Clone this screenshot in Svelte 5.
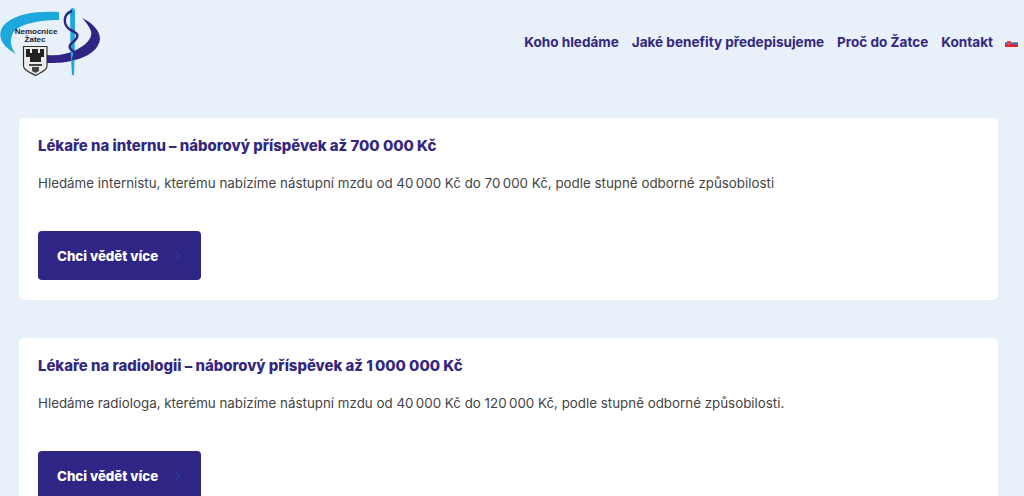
<script>
  const navLinks = ['Koho hledáme', 'Jaké benefity předepisujeme', 'Proč do Žatce', 'Kontakt'];
  const jobs = [
    {
      title: 'Lékaře na internu – náborový příspěvek až 700 000 Kč',
      text: 'Hledáme internistu, kterému nabízíme nástupní mzdu od 40\u2009000 Kč do 70\u2009000 Kč, podle stupně odborné způsobilosti'
    },
    {
      title: 'Lékaře na radiologii – náborový příspěvek až 1\u2009000 000 Kč',
      text: 'Hledáme radiologa, kterému nabízíme nástupní mzdu od 40\u2009000 Kč do 120\u2009000 Kč, podle stupně odborné způsobilosti.'
    }
  ];
</script>

<div class="page">
  <header>
    <svg class="logo" width="102" height="78" viewBox="0 0 102 78" aria-label="Nemocnice Žatec">
      <path d="M59 12 C38 11 18 13 6 23 C-1 29 -1 37 3 43 C6 48 11 51 16 54 C11 48 9 41 13 33 C19 24 38 20 59 20 Z" fill="#1ea7dc" />
      <path d="M82 18 C93 23 100 31 100 39 C99 50 87 57 75 60 C65 63 56 63 47 63 L47 55 C58 56 68 54 76 50 C86 45 93 38 91 31 C89 26 86 22 82 18 Z" fill="#2f2585" />
      <path d="M70 10 Q72.5 6 75 10 L74.8 50 L74 75 H72 L70.5 50 Z" fill="#1ea7dc" />
      <path d="M72 11 C63 14 63 24 69 29 C75 32 80 34 76 39 C73 43 68 44 70 48 C71 51 75 51 74.5 54 C74 57 73 58 73 60" stroke="#2f2585" stroke-width="2.4" fill="none" />
      <path d="M23.5 46.5 H47 V66 C47 71 39 73 35.5 75.5 C32 73 23.5 71 23.5 66 Z" fill="#ececec" stroke="#333" stroke-width="1.2" />
      <path d="M26 49 H30 V53 H32 V49 H38 V53 H40 V49 H44 V57 H41 V62 H30 V57 H26 Z" fill="#222" />
      <path d="M29 64 H42 V66 H29 Z M32 67 H39 V71 L35.5 73 L32 71 Z" fill="#444" />
      <text x="36" y="33.5" class="logo-text">Nemocnice</text>
      <text x="35" y="41.5" class="logo-text">Žatec</text>
    </svg>
    <nav>
      {#each navLinks as link}
        <a href="#top">{link}</a>
      {/each}
      <svg class="flag" width="13" height="7" viewBox="0 0 13 7" aria-label="Slovensky">
        <rect width="13" height="7" fill="#ee1c25" />
        <rect width="13" height="4.6" fill="#3f6fc0" />
        <rect width="13" height="2.3" fill="#f2f2f4" />
        <path d="M2 1 H6 V4.5 L4 6 L2 4.5 Z" fill="#e2474f" />
      </svg>
    </nav>
  </header>

  <main>
    {#each jobs as job}
      <section class="card">
        <h2>{job.title}</h2>
        <p>{job.text}</p>
        <a class="btn" href="#top">
          Chci vědět více
          <svg width="6" height="9" viewBox="0 0 6 9"><path d="M1 1 L4.5 4.5 L1 8" stroke="#2b4a9f" stroke-width="1" fill="none" /></svg>
        </a>
      </section>
    {/each}
  </main>
</div>

<style>
  :global(body) {
    margin: 0;
    background: #e8f0f9;
    overflow: hidden;
  }

  .page {
    height: 496px;
    overflow: hidden;
    font-family: Inter, "Liberation Sans", sans-serif;
  }

  header {
    display: flex;
    justify-content: space-between;
    align-items: center;
    height: 84px;
    padding-right: 6px;
  }

  .logo {
    display: block;
    align-self: flex-start;
  }

  .logo-text {
    font-family: "Liberation Sans", sans-serif;
    font-size: 8px;
    font-weight: 700;
    fill: #1b1b2e;
    text-anchor: middle;
  }

  nav {
    display: flex;
    align-items: center;
    gap: 13px;
  }

  nav a {
    color: #33277f;
    font-size: 13.55px;
    font-weight: 700;
    text-decoration: none;
  }

  .flag {
    margin-top: 3px;
    margin-left: -1px;
  }

  main {
    display: flex;
    flex-direction: column;
    gap: 38px;
    padding: 34px 26px 0 19px;
  }

  .card {
    background: #fff;
    border-radius: 5px;
    padding: 18px 19px 20px;
  }

  h2 {
    margin: 0;
    color: #33277f;
    font-size: 14.9px;
    font-weight: 800;
    line-height: 20px;
  }

  p {
    margin: 17px 0 0;
    color: #444;
    font-size: 13.35px;
    line-height: 20px;
  }

  .btn {
    display: flex;
    align-items: center;
    gap: 17px;
    box-sizing: border-box;
    width: 163px;
    height: 49px;
    margin-top: 38px;
    padding-left: 19px;
    background: #2f2585;
    border-radius: 4px;
    color: #fff;
    font-size: 13.3px;
    font-weight: 800;
    text-decoration: none;
  }
</style>
